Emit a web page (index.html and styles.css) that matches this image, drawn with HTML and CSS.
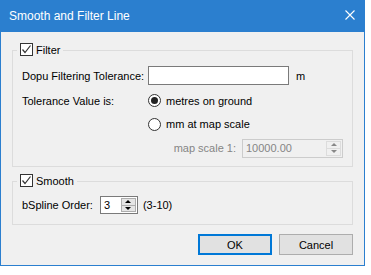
FILE: index.html
```html
<!DOCTYPE html>
<html lang="en">
<head>
  <meta charset="UTF-8" />
  <title>Smooth and Filter Line</title>
  <link rel="stylesheet" href="styles.css">
</head>
<body>
  <div class="dialog">
    <div class="titlebar">
      <span class="title">Smooth and Filter Line</span>
      <svg class="close" width="10" height="10" viewBox="0 0 10 10">
        <path d="M0.5 0.5 L9.5 9.5 M9.5 0.5 L0.5 9.5" stroke="#fff" stroke-width="1.1" fill="none"/>
      </svg>
    </div>

    <div class="content">
      <div class="group filter">
        <div class="legend">
          <span class="check"><svg width="11" height="11" viewBox="0 0 11 11"><path d="M1.5 5.5 L4 8.5 L9.5 1.5" stroke="#333" stroke-width="1.2" fill="none"/></svg></span>
          <span>Filter</span>
        </div>
        <div class="form-grid">
          <span class="label">Dopu Filtering Tolerance:</span>
          <div class="field">
            <span class="textbox"></span>
            <span class="unit">m</span>
          </div>

          <span class="label">Tolerance Value is:</span>
          <div class="field"><span class="radio on"></span>metres on ground</div>

          <span></span>
          <div class="field"><span class="radio"></span>mm at map scale</div>

          <div class="field scale">
            <span class="muted">map scale 1:</span>
            <div class="spin disabled">
              <span class="spin-value">10000.00</span>
              <span class="spin-buttons">
                <span class="arrow up"></span>
                <span class="arrow down"></span>
              </span>
            </div>
          </div>
        </div>
      </div>

      <div class="group smooth">
        <div class="legend">
          <span class="check"><svg width="11" height="11" viewBox="0 0 11 11"><path d="M1.5 5.5 L4 8.5 L9.5 1.5" stroke="#333" stroke-width="1.2" fill="none"/></svg></span>
          <span>Smooth</span>
        </div>
        <div class="order-row">
          <span class="label">bSpline Order:</span>
          <div class="spin small">
            <span class="spin-value">3</span>
            <span class="spin-buttons">
              <span class="arrow up"></span>
              <span class="arrow down"></span>
            </span>
          </div>
          <span>(3-10)</span>
        </div>
      </div>

      <div class="buttons">
        <button type="button" class="default">OK</button>
        <button type="button">Cancel</button>
      </div>
    </div>
  </div>
</body>
</html>
```

FILE: styles.css
```css
body {
  margin: 0;
  background: #fff;
  font-family: "Liberation Sans", Arial, sans-serif;
  font-size: 11px;
  color: #000;
}
.dialog {
  width: 365px;
  height: 266px;
  box-sizing: border-box;
  border: 1px solid #2b7fcf;
  border-top: none;
  background: #f0f0f0;
  display: flex;
  flex-direction: column;
}
.titlebar {
  height: 31px;
  margin: 0 -1px;
  background: #2b7fcf;
  display: flex;
  align-items: center;
  justify-content: space-between;
  padding: 0 10px 1px 9px;
  flex-shrink: 0;
}
.title { color: #fff; font-size: 12px; }
.close { margin-bottom: 1px; }

.content { padding: 18px 11px 0; }

.group { border: 1px solid #dcdcdc; padding: 0 9px; }
.filter { padding-bottom: 5px; }
.smooth { margin-top: 14px; padding-bottom: 7px; }

.legend {
  display: flex;
  align-items: center;
  gap: 3px;
  width: fit-content;
  height: 15px;
  margin: -9px 0 0 -5px;
  padding: 0 3px;
  background: #f0f0f0;
}
.check {
  width: 11px; height: 11px;
  border: 1px solid #333;
  background: #fff;
  display: flex;
}

.form-grid {
  margin-top: 6px;
  display: grid;
  grid-template-columns: 126px 1fr;
  grid-template-rows: 25px 25px 22px 26px;
  align-items: center;
}
.field { display: flex; align-items: center; }
.textbox {
  width: 139px; height: 17px;
  border: 1px solid #7a7a7a;
  background: #fff;
}
.unit { margin-left: 7px; }
.radio {
  width: 11px; height: 11px;
  border: 1px solid #333;
  border-radius: 50%;
  background: #fff;
  margin-right: 5px;
  display: flex;
  align-items: center;
  justify-content: center;
}
.radio.on::after {
  content: "";
  width: 7px; height: 7px;
  border-radius: 50%;
  background: #222;
}
.scale { grid-column: 1 / 3; justify-content: flex-end; gap: 6px; }
.muted { color: #858585; }

.spin {
  display: flex;
  align-items: stretch;
  border: 1px solid #7a7a7a;
  background: #fff;
  box-sizing: border-box;
}
.spin.disabled {
  width: 101px; height: 19px;
  border-color: #cccccc;
  background: #f0f0f0;
  color: #858585;
}
.spin.small { width: 38px; height: 18px; }
.spin-value { flex: 1; padding-left: 3px; display: flex; align-items: center; }
.spin-buttons {
  width: 15px;
  display: flex;
  flex-direction: column;
  margin: 1px 1px 1px 0;
}
.arrow {
  flex: 1;
  background: #e5e5e5;
  border: 1px solid #adadad;
  display: flex;
  align-items: center;
  justify-content: center;
}
.arrow.down { border-top: none; }
.arrow::after {
  content: "";
  border-left: 3px solid transparent;
  border-right: 3px solid transparent;
}
.arrow.up::after { border-bottom: 3px solid #000; }
.arrow.down::after { border-top: 3px solid #000; }
.disabled .arrow { background: #f0f0f0; border-color: #dcdcdc; }
.disabled .arrow.up::after { border-bottom-color: #888; }
.disabled .arrow.down::after { border-top-color: #888; }

.order-row {
  margin-top: 5px;
  height: 24px;
  display: flex;
  align-items: center;
}
.order-row .label { margin-right: 7px; }
.order-row .spin { margin-right: 5px; }

.buttons {
  margin-top: 9px;
  display: flex;
  justify-content: flex-end;
  gap: 7px;
}
.buttons button {
  width: 74px; height: 21px;
  font: inherit;
  color: #000;
  background: #e1e1e1;
  border: 1px solid #adadad;
  padding: 0;
}
.buttons button.default { border: 2px solid #0078d7; }
```
